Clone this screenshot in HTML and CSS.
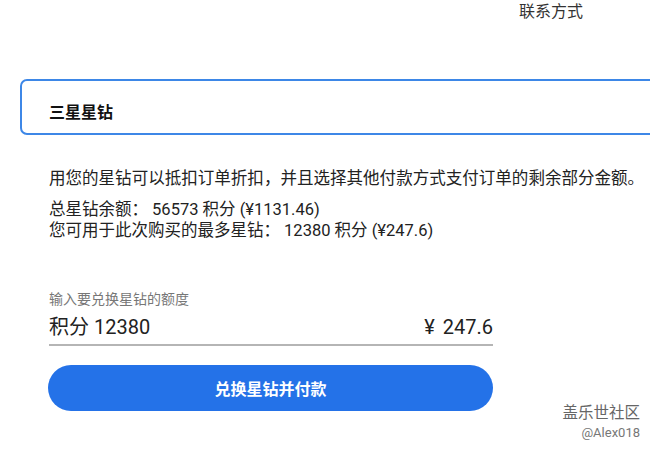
FILE: index.html
```html
<!DOCTYPE html>
<html lang="zh-CN">
<head>
  <meta charset="UTF-8" />
  <title>三星星钻</title>
  <link rel="stylesheet" href="styles.css">
</head>
<body>

<!-- 顶部 -->
<div class="topbar">
  <a class="contact">联系方式</a>
</div>

<!-- 星钻卡片 -->
<div class="card">
  <h2>三星星钻</h2>
</div>

<div class="content">
  <p class="desc">用您的星钻可以抵扣订单折扣，并且选择其他付款方式支付订单的剩余部分金额。</p>
  <div class="balance">
    <div>总星钻余额： 56573 积分 (¥1131.46)</div>
    <div>您可用于此次购买的最多星钻： 12380 积分 (¥247.6)</div>
  </div>

  <div class="field">
    <label>输入要兑换星钻的额度</label>
    <div class="input-row">
      <span>积分 12380</span>
      <span><span class="yen">¥</span>247.6</span>
    </div>
  </div>

  <button class="pay">兑换星钻并付款</button>
</div>

<div class="watermark">
  <div class="wm-name">盖乐世社区</div>
  <div class="wm-user">@Alex018</div>
</div>

</body>
</html>
```
FILE: styles.css
```css
* {
  box-sizing: border-box;
  font-family: Roboto, "Noto Sans CJK SC", sans-serif;
}
body {
  margin: 0;
  background: #fff;
  color: #222;
  overflow: hidden;
}
.topbar {
  display: flex;
  justify-content: flex-end;
  padding: 1px 67px 0 0;
  height: 79px;
}
.contact {
  font-size: 16px;
  line-height: 22px;
  color: #333;
}
.card {
  margin: 0 -20px 0 20px;
  height: 56px;
  border: 2px solid #3d87e7;
  border-radius: 7px;
  padding: 21px 0 0 27px;
}
.card h2 {
  margin: 0;
  font-size: 16px;
  line-height: 22px;
  font-weight: bold;
  color: #111;
}
.content {
  padding: 0 0 0 49px;
  width: 493px;
}
.desc, .balance {
  font-family: "Noto Sans CJK SC", sans-serif;
}
.desc {
  margin: 30px 0 0;
  font-size: 16.55px;
  line-height: 24px;
  white-space: nowrap;
}
.balance {
  margin-top: 10px;
  font-size: 16.5px;
  line-height: 21px;
  white-space: nowrap;
}
.field {
  margin-top: 49px;
}
.field label {
  display: block;
  font-size: 14px;
  line-height: 18px;
  color: #777;
}
.input-row {
  display: flex;
  justify-content: space-between;
  margin-top: 5px;
  font-size: 20px;
  line-height: 28px;
  padding-bottom: 3px;
  border-bottom: 2px solid #b5b5b5;
  color: #222;
}
.yen {
  margin-right: 8px;
}
.pay {
  display: block;
  width: 445px;
  height: 46px;
  margin: 19px 0 0 -1px;
  border: none;
  border-radius: 23px;
  background: #2472e8;
  color: #fff;
  font-size: 16px;
  font-weight: bold;
}
.watermark {
  position: absolute;
  right: 10px;
  top: 403px;
  text-align: right;
}
.wm-name {
  font-size: 15.5px;
  line-height: 21px;
  color: #666;
}
.wm-user {
  font-size: 13px;
  line-height: 18px;
  color: #777;
}
```
